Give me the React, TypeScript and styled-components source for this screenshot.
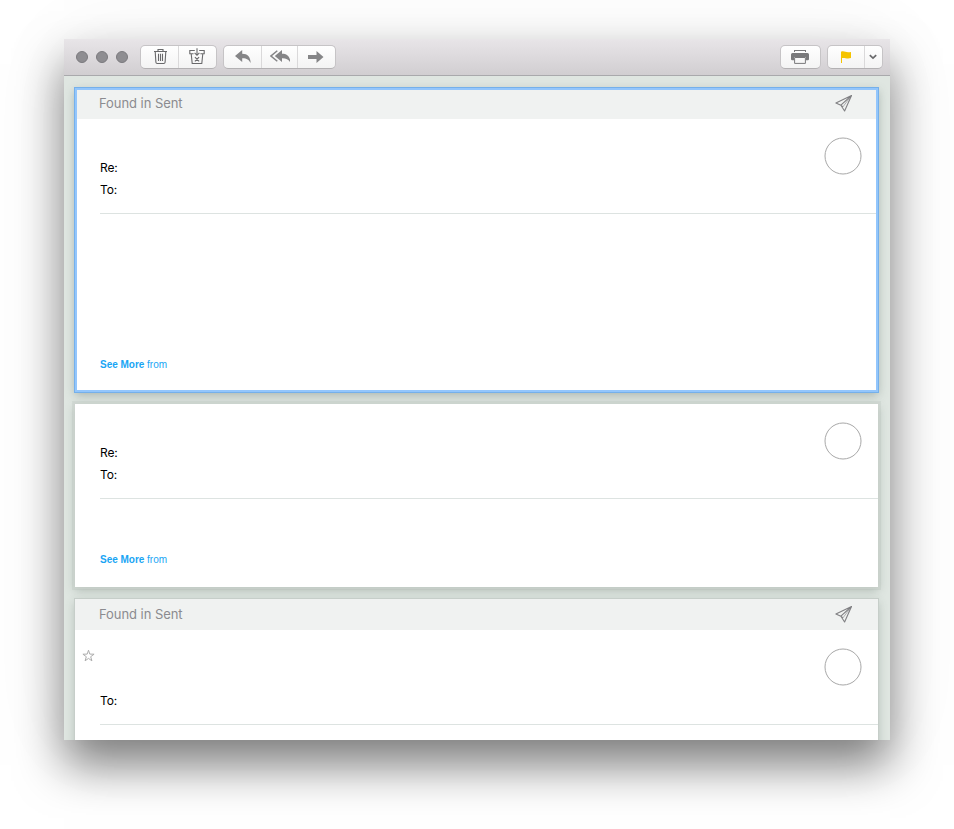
import React from "react";
import styled, { createGlobalStyle } from "styled-components";

const Global = createGlobalStyle`
  * { box-sizing: border-box; }
  body { margin: 0; background: #fff; overflow: hidden; }
`;

const Desktop = styled.div`
  width: 954px;
  height: 829px;
  padding: 39px 64px 89px;
  overflow: hidden;
  font-family: Inter, "Liberation Sans", sans-serif;
`;

const Window = styled.main`
  height: 701px;
  display: flex;
  flex-direction: column;
  background: #dfe6e1;
  box-shadow: 0 25px 44px rgba(0, 0, 0, 0.5), 0 0 80px rgba(0, 0, 0, 0.05);
`;

const Toolbar = styled.header`
  flex: none;
  height: 37px;
  padding: 6px 7px 0 12px;
  display: flex;
  align-items: flex-start;
  background: linear-gradient(#e8e5e8, #d1ced1);
  border-bottom: 1px solid #a9a9ac;
`;

const Lights = styled.div`
  display: flex;
  gap: 8px;
  margin: 6px 12px 0 0;
`;

const Light = styled.span`
  width: 12px;
  height: 12px;
  border-radius: 50%;
  background: #8e8d91;
  border: 1px solid #7b7a7e;
`;

const Group = styled.div<{ $gap?: number }>`
  display: flex;
  height: 24px;
  margin-right: ${(p) => p.$gap ?? 0}px;
  border: 1px solid #c6c4c6;
  border-bottom-color: #b3b1b3;
  border-radius: 5px;
  background: linear-gradient(#fff, #f4f4f4);
`;

const Button = styled.button<{ $w: number }>`
  width: ${(p) => p.$w}px;
  padding: 0;
  border: 0;
  background: none;
  display: flex;
  align-items: center;
  justify-content: center;
  & + & { border-left: 1px solid #dad9da; }
  svg { display: block; }
`;

const Spacer = styled.div`
  flex: 1;
`;

const Thread = styled.div`
  flex: 1;
  min-height: 0;
  padding: 12px 11px 0;
  overflow: hidden;
`;

const Card = styled.article<{ $h: number; $kind: "selected" | "framed" | "plain"; $gap: number }>`
  height: ${(p) => p.$h}px;
  margin-bottom: ${(p) => p.$gap}px;
  margin-right: 1px;
  background: #fff;
  box-shadow: ${(p) =>
    p.$kind === "selected"
      ? "inset 0 0 0 2px #93c6fc, 0 0 0 1px #75b0ea, 0 3px 9px rgba(70,90,80,.36)"
      : p.$kind === "framed"
      ? "0 0 0 2px rgba(205,214,208,.55), 0 0 0 3px rgba(185,197,190,.3), 0 3px 9px rgba(70,90,80,.34)"
      : "0 0 0 1px #c6cec9, 0 3px 9px rgba(70,90,80,.3)"};
`;

const Found = styled.div<{ $inset?: boolean }>`
  height: ${(p) => (p.$inset ? 29 : 31)}px;
  margin: 0 ${(p) => (p.$inset ? 2 : 0)}px;
  padding: 0 ${(p) => (p.$inset ? 23 : 25)}px ${(p) => (p.$inset ? 3 : 1)}px ${(p) => (p.$inset ? 22 : 24)}px;
  display: flex;
  align-items: center;
  justify-content: space-between;
  background: #f0f2f1;
  color: #8b8b8f;
  font-size: 13px;
  letter-spacing: -0.06px;
  line-height: 16px;
  svg { display: block; }
`;

const Summary = styled.div<{ $h: number; $inset?: boolean }>`
  height: ${(p) => p.$h}px;
  margin: 0 ${(p) => (p.$inset ? 2 : 0)}px 0 25px;
  padding-right: ${(p) => (p.$inset ? 14.5 : 16.5)}px;
  display: flex;
  justify-content: space-between;
  border-bottom: 1px solid #dde3e1;
`;

const Fields = styled.div`
  align-self: flex-end;
  padding-bottom: 12px;
  color: #000;
  font-size: 12px;
  letter-spacing: -0.1px;
  line-height: 22px;
`;

const Avatar = styled.svg`
  display: block;
  width: 38px;
  height: 38px;
  margin-top: 18px;
  fill: none;
  stroke: #a8a8a8;
`;

const StarSlot = styled.div`
  width: 14px;
  height: 14px;
  margin: 19px 0 0 -18px;
  svg { display: block; }
`;

const Left = styled.div`
  display: flex;
  flex-direction: column;
  justify-content: space-between;
`;

const More = styled.div<{ $top: number }>`
  padding: ${(p) => p.$top}px 0 0 25px;
  color: #19a5f4;
  font: 10px/12px "Liberation Sans", Arial, sans-serif;
  letter-spacing: -0.02px;
  b { font-weight: 700; }
`;

const Plane = () => (
  <svg width="18" height="18" viewBox="0 0 18 18" fill="none" stroke="#808083" strokeWidth="1.1" strokeLinejoin="round">
    <path d="M16.500 1.500 .9 9l5 2.200L9.600 17ZM16.500 1.500 5.900 11.200M5.900 11.200l2 1.700" />
    <path d="M7.900 12.900 16.500 1.500" strokeWidth=".6" />
  </svg>
);

const Trash = () => (
  <svg width="16" height="18" viewBox="0 0 16 18" fill="none" stroke="#69696b" strokeWidth="1.1">
    <path d="M2 3.500h13M6 3.200V1.500h5v1.700M3.200 3.500l.7 10.800q.1 1.200 1.300 1.200h6.600q1.200 0 1.300-1.200l.7-10.800M6.500 5.800v7.200M8.500 5.800v7.200M10.500 5.800v7.200" />
  </svg>
);

const Junk = () => (
  <svg width="18" height="18" viewBox="0 0 18 18" fill="none" stroke="#69696b" strokeWidth="1.1">
    <path d="M5.800 2.500H.8v3.200h3.800M10.200 2.500h5v3.200h-3.800M2.200 5.700l1 9.800h9.600l1-9.800M8 .3v6.700M5.600 4.800 8 7.300l2.400-2.500M5.900 9.200l4.200 4.200M10.100 9.200l-4.200 4.200" />
  </svg>
);

const Reply = () => (
  <svg width="16" height="14" viewBox="0 0 16 14" fill="#858587">
    <path d="M0 6 7.200 0v3.700c5.500 0 8.100 3 8.500 9.300C13.900 9.500 11.700 8.100 7.200 8.200v3.700Z" />
  </svg>
);

const ReplyAll = () => (
  <svg width="20" height="14" viewBox="0 0 20 14" fill="#858587">
    <path d="M4.800 6 12 0v3.700c5.500 0 8.100 3 8.600 9.300-1.900-3.500-4.100-4.900-8.600-4.800v3.700Z" />
    <path d="M7.300.7 1 6l6.300 5.300" fill="none" stroke="#858587" strokeWidth="1.500" />
  </svg>
);

const Forward = () => (
  <svg width="18" height="12" viewBox="0 0 18 12" fill="#858587">
    <path d="M0 4h8.500V0L15.500 6l-7 6V8H0Z" />
  </svg>
);

const Print = () => (
  <svg width="20" height="14" viewBox="0 0 20 14" fill="#79797b">
    <path d="M3 0h12v2.100h-1V1H4v1.100H3ZM1.500 3h15Q18 3 18 4.500V9q0 1.200-1.200 1.200H15V7H3v3.200H1.200Q0 10.200 0 9V4.500Q0 3 1.500 3Z" />
    <path d="M3.600 7.500h10.800v5.900H3.600Z" fill="none" stroke="#79797b" />
  </svg>
);

const Flag = () => (
  <svg width="10" height="12" viewBox="0 0 10 12" fill="#f5c400">
    <path d="M0 .7C1.500 0 2.800.2 4.500.8c1.500.5 3 .6 5.500.1v6.200c-2 .6-3.800.5-5.500.1C3.200 6.800 2.200 6.800 1 7.100V12H0Z" />
  </svg>
);

const Chevron = () => (
  <svg width="10" height="6" viewBox="0 0 10 6" fill="none" stroke="#69696b" strokeWidth="1.700">
    <path d="m.8 1.200 3.200 3 3.200-3" />
  </svg>
);

const Star = () => (
  <svg width="13" height="13" viewBox="0 0 13 13" fill="none" stroke="#adadad" strokeWidth="1">
    <path d="m6.500 1.200 1.300 3.900 4.300.1-3.400 2.500 1.200 4.100-3.400-2.400-3.400 2.400 1.200-4.100L.9 5.200l4.300-.1Z" />
  </svg>
);

const FoundBar = ({ inset }: { inset?: boolean }) => (
  <Found $inset={inset}>
    <span>Found in Sent</span>
    <Plane />
  </Found>
);

type HeaderProps = { fields: string[]; height: number; starred?: boolean; inset?: boolean };

const Header = ({ fields, height, starred, inset }: HeaderProps) => (
  <Summary $h={height} $inset={inset}>
    <Left>
      {starred ? <StarSlot><Star /></StarSlot> : <span />}
      <Fields>
        {fields.map((f) => <div key={f}>{f}</div>)}
      </Fields>
    </Left>
    <Avatar viewBox="0 0 38 38"><circle cx="19" cy="19" r="18" /></Avatar>
  </Summary>
);

const SeeMore = ({ top }: { top: number }) => (
  <More $top={top}><b>See More</b> from</More>
);

const SelectedTop = styled.div`
  height: 2px;
`;

export default function App() {
  return (
    <Desktop>
      <Global />
      <Window>
        <Toolbar>
          <Lights><Light /><Light /><Light /></Lights>
          <Group $gap={6}>
            <Button $w={37} aria-label="Delete"><Trash /></Button>
            <Button $w={38} aria-label="Junk"><Junk /></Button>
          </Group>
          <Group>
            <Button $w={37} aria-label="Reply"><Reply /></Button>
            <Button $w={36} aria-label="Reply all"><ReplyAll /></Button>
            <Button $w={38} aria-label="Forward"><Forward /></Button>
          </Group>
          <Spacer />
          <Group $gap={6}>
            <Button $w={39} aria-label="Print"><Print /></Button>
          </Group>
          <Group>
            <Button $w={36} aria-label="Flag"><Flag /></Button>
            <Button $w={18} aria-label="Flag options"><Chevron /></Button>
          </Group>
        </Toolbar>
        <Thread>
          <Card $h={304} $kind="selected" $gap={12}>
            <SelectedTop />
            <FoundBar inset />
            <Header fields={["Re:", "To:"]} height={95} inset />
            <SeeMore top={145} />
          </Card>
          <Card $h={183} $kind="framed" $gap={12}>
            <Header fields={["Re:", "To:"]} height={95} />
            <SeeMore top={55} />
          </Card>
          <Card $h={160} $kind="plain" $gap={0}>
            <FoundBar />
            <Header fields={["To:"]} height={95} starred />
          </Card>
        </Thread>
      </Window>
    </Desktop>
  );
}
